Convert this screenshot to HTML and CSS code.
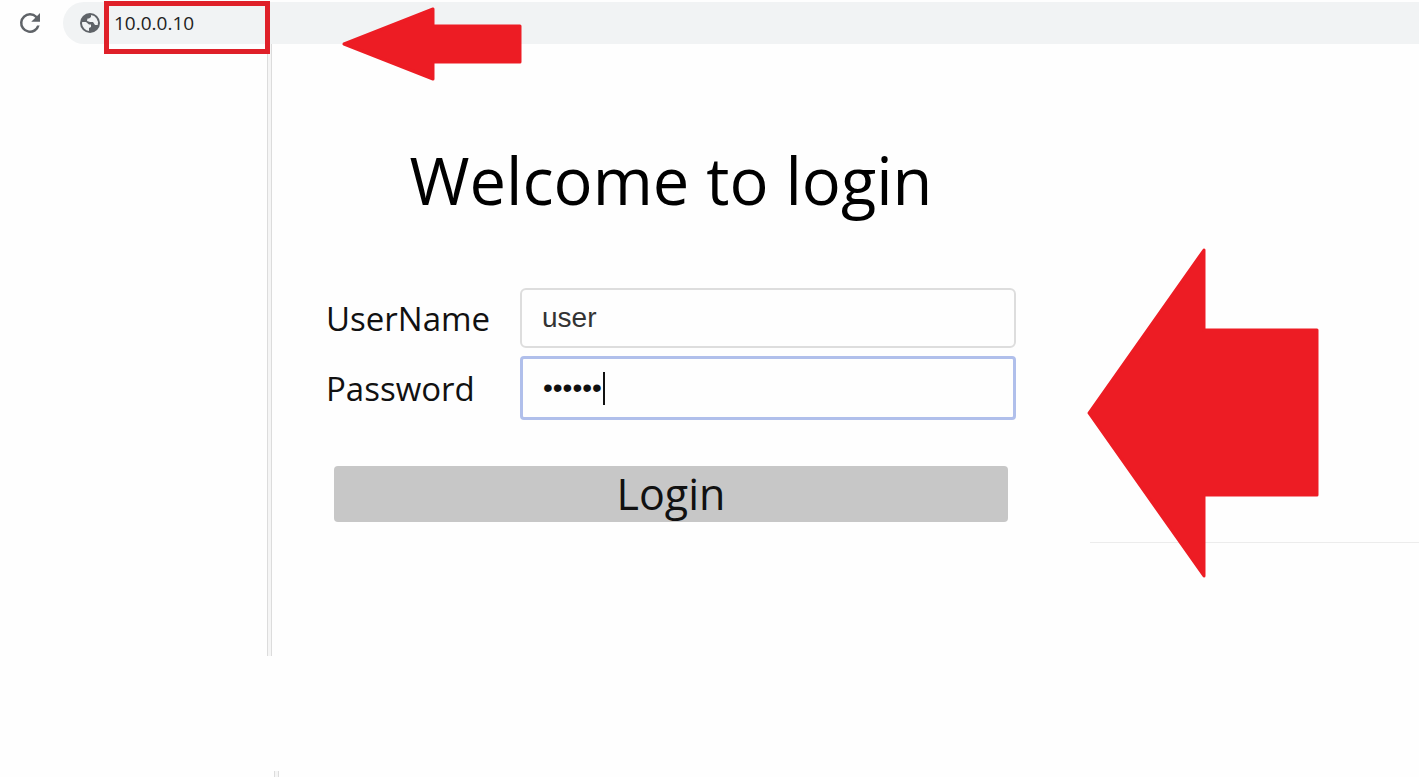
FILE: index.html
```html
<!DOCTYPE html>
<html lang="en">
<head>
<meta charset="UTF-8">
<meta name="viewport" content="width=device-width, initial-scale=1.0">
<title>Login</title>
<link rel="stylesheet" href="styles.css">
</head>
<body>

<header class="toolbar">
  <button class="reload" type="button" aria-label="Reload">
    <svg width="30" height="30" viewBox="0 0 24 24"><path fill="#5f6368" d="M17.650 6.350A7.950 7.950 0 0 0 12 4a8 8 0 1 0 7.730 10h-2.080A6 6 0 1 1 12 6c1.660 0 3.140.690 4.220 1.780L13 11h7V4z"/></svg>
  </button>
  <div class="address-bar">
    <svg class="globe" width="24" height="24" viewBox="0 0 24 24"><circle cx="12" cy="12" r="10" fill="#5f6368"/><path fill="#f1f3f4" d="M4 12.500L4.200 11H8l3 2.500h2V16l-2 1v2.900A8 8 0 0 1 4 12.500zM13 4.100V6l-2 1.500H9.500L9 10l3 1h3l2 3h2.700A8 8 0 0 0 13 4.100z"/></svg>
    <input class="address" type="text" value="10.0.0.10" aria-label="Address">
    <div class="highlight"></div>
    <svg class="arrow arrow-small" width="180" height="74" viewBox="0 0 180 74"><path d="M2 37L91 2V19H178V55H91V72Z"/></svg>
  </div>
</header>

<main class="page">
  <div class="sidebar"></div>
  <div class="divider"></div>
  <form class="login">
    <h1 class="title">Welcome to login</h1>
    <div class="field">
      <label for="username">UserName</label>
      <input type="text" id="username" value="user">
    </div>
    <div class="field">
      <label for="password">Password</label>
      <div class="password-box">
        <input class="active" type="password" id="password" value="123456">
        <span class="caret"></span>
      </div>
    </div>
    <button class="login-button" type="button">Login</button>
  </form>
  <div class="side">
    <svg class="arrow arrow-big" width="233" height="332" viewBox="0 0 233 332"><path d="M3 166L118 3V83H231V248H118V329Z"/></svg>
  </div>
</main>
<div class="divider divider-end"></div>

</body>
</html>
```

FILE: styles.css
```css
/* General Styles */
* {
  box-sizing: border-box;
}

body {
  margin: 0;
  font-family: "Open Sans", "Noto Sans", sans-serif;
  background-color: #fefefe;
  color: #111;
}

button,
input {
  font-family: inherit;
  color: inherit;
}

/* Browser bar */
.toolbar {
  display: flex;
  padding: 2px 0 0 15px;
  gap: 18px;
}

.reload {
  display: flex;
  align-items: center;
  padding: 0;
  border: none;
  background: none;
}

.address-bar {
  position: relative;
  flex: 1;
  display: flex;
  align-items: center;
  gap: 12px;
  height: 42px;
  padding-left: 15px;
  border-radius: 21px 0 0 21px;
  background-color: #f1f3f4;
}

.address {
  flex: 1;
  padding: 0;
  border: none;
  outline: none;
  background: none;
  font-size: 19px;
  color: #222;
}

.highlight {
  position: absolute;
  top: -1px;
  left: 41px;
  width: 166px;
  height: 53px;
  border: 5px solid #df2029;
}

.arrow {
  position: absolute;
  fill: #ed1c24;
  stroke: #ed1c24;
  stroke-width: 3;
  stroke-linejoin: round;
}

.arrow-small {
  top: 5px;
  left: 279px;
}

/* Page */
.page {
  display: flex;
  min-height: 612px;
}

.sidebar {
  width: 267px;
}

.divider {
  width: 5px;
  border: solid #dcdcdc;
  border-width: 0 1px;
  background-color: #f5f5f5;
}

.login {
  width: 818px;
  padding: 90px 74px 0 54px;
}

.title {
  margin: 0 0 60px;
  font-size: 65px;
  font-weight: 400;
  line-height: 92px;
  text-align: center;
  color: #000;
}

.field {
  display: flex;
  align-items: center;
  height: 64px;
  margin-bottom: 6px;
}

.field label {
  width: 194px;
  font-size: 33px;
}

.field input {
  flex: 1;
  width: 100%;
  height: 60px;
  padding: 0 20px;
  border: 2px solid #ddd;
  border-radius: 6px;
  outline: none;
  background-color: #fefefe;
  font-family: "Liberation Sans", Arial, sans-serif;
  font-size: 28px;
  color: #333;
}

.password-box {
  position: relative;
  flex: 1;
  display: flex;
}

.field .active {
  height: 64px;
  border: 3px solid #b0bfeb;
  border-radius: 4px;
  color: #111;
}

.caret {
  position: absolute;
  top: 16px;
  left: 83px;
  width: 2px;
  height: 33px;
  background-color: #111;
}

.login-button {
  display: block;
  width: calc(100% - 16px);
  height: 56px;
  margin: 46px auto 0;
  padding: 0;
  border: none;
  border-radius: 4px;
  background-color: #c7c7c7;
  font-size: 43px;
  line-height: 56px;
}

.side {
  position: relative;
  flex: 1;
  height: 499px;
  border-bottom: 1px solid #ececec;
}

.arrow-big {
  top: 203px;
  left: -4px;
}

.divider-end {
  height: 6px;
  margin: 115px 0 0 274px;
}
```
